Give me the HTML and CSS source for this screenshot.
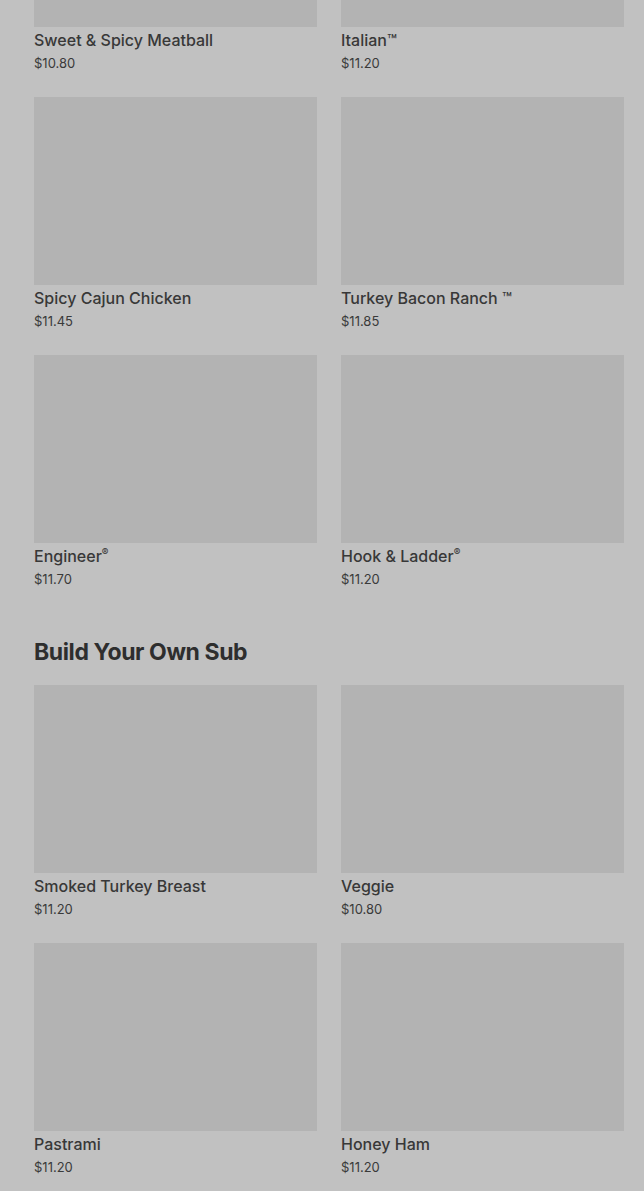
FILE: index.html
```html
<!DOCTYPE html>
<html lang="en">
<head>
<meta charset="utf-8">
<title>Menu</title>
<link rel="stylesheet" href="styles.css">
</head>
<body>
<main class="page">
  <section class="section">
    <div class="grid">
      <article class="card"><div class="thumb"></div><h3 class="name">Sweet &amp; Spicy Meatball</h3><p class="price">$10.80</p></article>
      <article class="card"><div class="thumb"></div><h3 class="name">Italian™</h3><p class="price">$11.20</p></article>
      <article class="card"><div class="thumb"></div><h3 class="name">Spicy Cajun Chicken</h3><p class="price">$11.45</p></article>
      <article class="card"><div class="thumb"></div><h3 class="name">Turkey Bacon Ranch ™</h3><p class="price">$11.85</p></article>
      <article class="card"><div class="thumb"></div><h3 class="name">Engineer<sup class="mark">®</sup></h3><p class="price">$11.70</p></article>
      <article class="card"><div class="thumb"></div><h3 class="name">Hook &amp; Ladder<sup class="mark">®</sup></h3><p class="price">$11.20</p></article>
    </div>
  </section>
  <section class="section">
    <h2 class="heading">Build Your Own Sub</h2>
    <div class="grid">
      <article class="card"><div class="thumb"></div><h3 class="name">Smoked Turkey Breast</h3><p class="price">$11.20</p></article>
      <article class="card"><div class="thumb"></div><h3 class="name">Veggie</h3><p class="price">$10.80</p></article>
      <article class="card"><div class="thumb"></div><h3 class="name">Pastrami</h3><p class="price">$11.20</p></article>
      <article class="card"><div class="thumb"></div><h3 class="name">Honey Ham</h3><p class="price">$11.20</p></article>
    </div>
  </section>
</main>
</body>
</html>
```

FILE: styles.css
```css
html, body {
  margin: 0;
  padding: 0;
  background: #c1c1c1;
}
body {
  font-family: Inter, "Noto Sans", "Liberation Sans", sans-serif;
  color: #383838;
  overflow: hidden;
}
.page {
  margin-top: -161px;
  padding: 0 20px 0 34px;
}
.grid {
  display: grid;
  grid-template-columns: 283px 283px;
  column-gap: 24px;
  row-gap: 24px;
}
.card {
  display: flex;
  flex-direction: column;
  margin: 0;
}
.thumb {
  height: 188px;
  background: #b3b3b3;
}
.name {
  margin: 1px 0 0;
  font-size: 16px;
  line-height: 24px;
  font-weight: 500;
  color: #383838;
}
.mark {
  font-size: 10px;
  vertical-align: 6px;
  line-height: 0;
}
.price {
  margin: 1px 0 0;
  font-size: 13px;
  line-height: 20px;
  font-weight: 400;
  color: #3a3a3a;
}
.heading {
  margin: 47px 0 17px;
  font-size: 23px;
  line-height: 32px;
  font-weight: 700;
  color: #2e2e2e;
  letter-spacing: -0.4px;
}
```
